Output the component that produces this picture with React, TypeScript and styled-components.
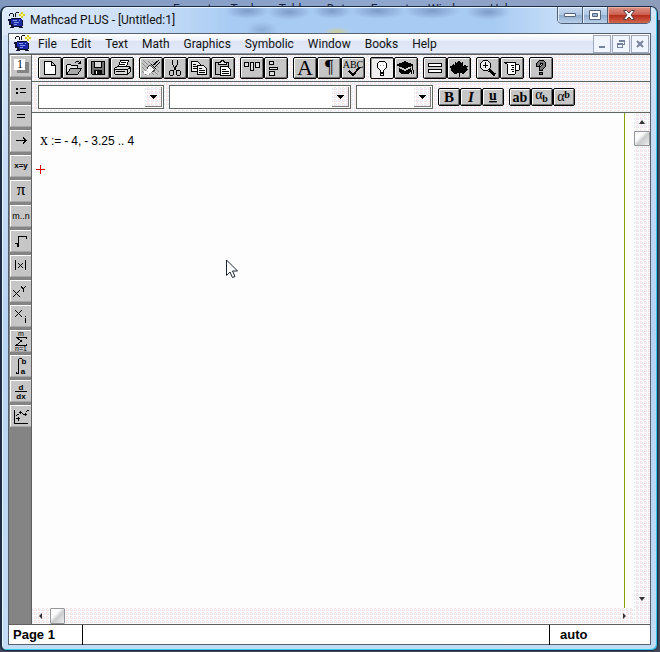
import React from 'react';
import styled, { createGlobalStyle, css } from 'styled-components';

const GlobalStyle = createGlobalStyle`
  *, *::before, *::after { box-sizing: border-box; }
  body { margin: 0; background: #42485a; }
  button, select { margin: 0; padding: 0; border: 0; background: none; font: inherit; color: inherit; }
  svg { display: block; }
`;

const uiFont = 'Roboto, "Open Sans", sans-serif';

const dither = css`
  background-color: #fdfcfd;
  background-image:
    conic-gradient(#f7e2e4 25%, transparent 0),
    conic-gradient(#e3e9f7 25%, transparent 0);
  background-size: 4px 2px, 2px 4px;
  background-position: 0 0, 1px 1px;
`;

const Desktop = styled.div`
  display: flex;
  flex-direction: column;
  min-height: 100vh;
  padding: 0 2px 1px 0;
  background: linear-gradient(90deg, #8098be 0, #8fa6cf 60%, #8c9cba 100%) top / 100% 20px no-repeat, #42485a;
`;

const BackMenu = styled.div`
  display: flex;
  gap: 19px;
  height: 6px;
  padding: 3px 0 0 173px;
  overflow: hidden;
  font: 12px/12px ${uiFont};
  color: #17233c;
`;

const Window = styled.div`
  flex: 1;
  display: flex;
  flex-direction: column;
  padding: 0 6px 5px 6px;
  border: 1px solid #1c2c44;
  border-left-width: 2px;
  border-radius: 7px 7px 6px 6px;
  box-shadow: inset -1px -1px 0 #2ccbf2, inset 1px 1px 0 #e9f5ff;
  background:
    radial-gradient(ellipse 22px 8px at 245px 4px, #7f9cc9, transparent),
    radial-gradient(ellipse 22px 8px at 287px 5px, #7f9cc9, transparent),
    radial-gradient(ellipse 20px 8px at 330px 4px, #7f9cc9, transparent),
    radial-gradient(ellipse 28px 8px at 376px 4px, #7f9cc9, transparent),
    radial-gradient(ellipse 28px 8px at 430px 4px, #7f9cc9, transparent),
    radial-gradient(ellipse 22px 8px at 486px 5px, #7f9cc9, transparent),
    radial-gradient(ellipse 16px 9px at 260px 23px, #8eaed8, transparent),
    radial-gradient(ellipse 14px 5px at 335px 25px, #d0cf99, transparent),
    linear-gradient(90deg, #dce9fa 0, #cbdff7 22%, #a8cbf3 35%, #a8cbf3 75%, #cfe2f8 88%, #d6e6f9 100%) top / 100% 28px no-repeat,
    linear-gradient(#d2e3f7, #b7d3f2 50%, #c3dcf5);
`;

const TitleBar = styled.header`
  display: flex;
  align-items: flex-start;
  height: 26px;
`;

const AppTitle = styled.h1`
  display: flex;
  align-items: center;
  gap: 5px;
  flex: 1;
  height: 26px;
  margin: 0;
  font: 12px/16px ${uiFont};
  color: #111;
`;

const Captions = styled.div`
  display: flex;
  border: 1px solid #4d6078;
  border-top: 0;
  border-radius: 0 0 5px 5px;
  overflow: hidden;
`;

const CaptionButton = styled.button<{ $close?: boolean }>`
  display: grid;
  place-items: center;
  width: ${p => (p.$close ? 42 : 25)}px;
  height: 16px;
  border-right: ${p => (p.$close ? 0 : 1)}px solid #4d6078;
  box-shadow: inset 1px 1px 0 ${p => (p.$close ? '#eeb0a4' : '#e6f1fc')};
  background: ${p =>
    p.$close
      ? 'linear-gradient(#dc9488 0, #cb5f50 48%, #b42a18 50%, #d2664d 100%)'
      : 'linear-gradient(#c8daef 0, #b0c8e5 48%, #8faccf 50%, #b7cfe9 100%)'};
`;

const Client = styled.div`
  flex: 1;
  display: flex;
  flex-direction: column;
  border: 1px solid #56606e;
  background: #fdfdfd;
`;

const MenuBar = styled.nav`
  display: flex;
  align-items: center;
  height: 20px;
  padding: 0 1px 0 5px;
  border-bottom: 1px solid #8b93a0;
  background: linear-gradient(#fff 0, #f1f4fc 30%, #dde4f5 40%, #e4eaf7 100%);
  font: 12px/16px ${uiFont};
  color: #111;
`;

const MenuItems = styled.div`
  display: flex;
  flex: 1;
  gap: 14px;
  padding-left: 7px;
`;

const DocButton = styled.button`
  display: grid;
  place-items: center;
  width: 18px;
  height: 18px;
  margin-left: 1px;
  border: 1px solid #a0a8bb;
  background: #f1f5fd;
`;

const Workspace = styled.div`
  flex: 1;
  display: flex;
  border-top: 1px solid #606060;
`;

const Palette = styled.aside`
  display: flex;
  flex-direction: column;
  gap: 3px;
  width: 23px;
  padding-left: 1px;
  border-right: 1px solid #606060;
  background: #848484;
`;

const PaletteButton = styled.button`
  width: 21px;
  height: 22px;
  border-top: 1px solid #fff;
  border-left: 1px solid #fff;
  border-bottom: 1px solid #a8a8a8;
  background: #c6c6c6;
`;

const Main = styled.main`
  flex: 1;
  min-width: 0;
  display: flex;
  flex-direction: column;
`;

const ToolBar = styled.div`
  display: flex;
  gap: 5px;
  height: 27px;
  padding: 2px 6px;
  border-bottom: 1px solid #606660;
  ${dither}
`;

const FormatBar = styled(ToolBar)`
  align-items: center;
  height: 31px;
`;

const Group = styled.div`
  display: flex;
`;

const ToolButton = styled.button<{ $active?: boolean }>`
  width: 24px;
  height: 22px;
  border: 1px solid #000;
  border-radius: 2px;
  box-shadow: ${p =>
    p.$active ? 'inset 1px 1px 0 #999' : 'inset 1px 1px 0 #fff, inset -1px -1px 0 #707070'};
  background: ${p => (p.$active ? '#eeeeee' : '#c6c6c6')};
`;

const StyleButton = styled(ToolButton)`
  width: 22px;
  height: 18px;
`;

const Combo = styled.div<{ $width: number }>`
  position: relative;
  width: ${p => p.$width}px;
  height: 24px;
  border: 1px solid #606660;
  background: #fff;
`;

const ComboSelect = styled.select`
  appearance: none;
  width: 100%;
  height: 100%;
  padding: 0 20px 0 4px;
  font: 12px ${uiFont};
`;

const ComboArrow = styled.span`
  position: absolute;
  top: 1px;
  right: 1px;
  display: grid;
  place-items: center;
  width: 17px;
  height: 20px;
  border-right: 1px solid #808080;
  border-bottom: 1px solid #808080;
  pointer-events: none;
  ${dither}
`;

const DocumentArea = styled.div`
  flex: 1;
  display: grid;
  grid-template-columns: 1fr 16px;
  grid-template-rows: 1fr 16px;
`;

const Sheet = styled.section`
  position: relative;
  margin-right: 9px;
  padding: 19px 3px;
  border-right: 1px solid #8a9f00;
`;

const Equation = styled.p`
  display: flex;
  align-items: baseline;
  gap: 3px;
  margin: 0 0 16px;
  padding-left: 5px;
  font: 12px/16px "Liberation Sans", Arial, sans-serif;
  color: #000;
`;

const Variable = styled.var`
  font: 16px/16px "Liberation Serif", serif;
`;

const Pointer = styled.svg`
  position: absolute;
  left: 194px;
  top: 146px;
`;

const VScroll = styled.div`
  display: flex;
  flex-direction: column;
  justify-content: space-between;
  ${dither}
`;

const HScroll = styled.div`
  display: flex;
  justify-content: space-between;
  ${dither}
`;

const ScrollPart = styled.div<{ $vertical?: boolean }>`
  display: flex;
  flex-direction: ${p => (p.$vertical ? 'column' : 'row')};
`;

const ScrollArrow = styled.button`
  display: grid;
  place-items: center;
  width: 16px;
  height: 18px;
`;

const ScrollThumb = styled.button`
  width: 16px;
  height: 15px;
  border: 1px solid #96969a;
  border-radius: 1px;
  background: linear-gradient(135deg, #fbfbfb 35%, #c9cbcd 55%, #ededed);
`;

const HArrow = styled(ScrollArrow)<{ $end?: boolean }>`
  height: 16px;
  width: ${p => (p.$end ? 20 : 18)}px;
`;

const HThumb = styled(ScrollThumb)`
  width: 15px;
  height: 16px;
`;

const Corner = styled.div`
  ${dither}
`;

const StatusBar = styled.footer`
  display: grid;
  grid-template-columns: 73px 1fr 101px;
  height: 20px;
  border-top: 1px solid #606060;
  background: #fff;
  font: bold 13px/20px "Liberation Sans", Arial, sans-serif;
  color: #000;
`;

const StatusCell = styled.div<{ $wide?: boolean }>`
  padding-left: ${p => (p.$wide ? 10 : 4)}px;
  & + & { border-left: 1px solid #000; }
`;

function Logo() {
  return (
    <svg width="17" height="17" viewBox="0 0 17 17" shapeRendering="crispEdges" aria-hidden="true">
      <path d="M3 7h11v1h1v6H4v-2H3z" fill="#1c2aa8" />
      <path d="M0 7h3v2H0zM1 9h2v3h2v3H3v-2H1zM3 6h10v1H3zM4 14h10v1H4zM14 8h1v6h-1z" fill="#101030" />
      <path d="M5 8h4v1H5zM6 10h5v1H6zM6 12h3v1H6zM11 8h1v1h-1z" fill="#7e95ee" />
      <path d="M2 1h3v1H2zM1 2h1v2H1zM5 2h1v3H5zM8 0h3v1H8zM7 1h1v4H7z" fill="#141414" />
      <path d="M13 0h2v2h2v2h-2v2h-2V4h-2V2h2z" fill="#d8cc26" />
      <path d="M13 2h2v2h-2z" fill="#fff78a" />
      <path d="M2 15h4v1H2zM11 15h4v1h-4z" fill="#101030" />
    </svg>
  );
}

type IconProps = { children: React.ReactNode; w?: number; h?: number };

function Drawing({ children, w = 22, h = 20 }: IconProps) {
  return (
    <svg
      width={w}
      height={h}
      viewBox={`0 0 ${w} ${h}`}
      fill="none"
      stroke="#000"
      shapeRendering="crispEdges"
      aria-hidden="true"
    >
      {children}
    </svg>
  );
}

type LetterProps = {
  x: number;
  y: number;
  size: number;
  children: React.ReactNode;
  sans?: boolean;
  bold?: boolean;
  italic?: boolean;
  underline?: boolean;
};

function Letter({ x, y, size, children, sans, bold, italic, underline }: LetterProps) {
  return (
    <text
      x={x}
      y={y}
      textAnchor="middle"
      fill="#000"
      stroke="none"
      fontFamily={sans ? '"Liberation Sans", sans-serif' : '"Liberation Serif", serif'}
      fontSize={size}
      fontWeight={bold ? 700 : 400}
      fontStyle={italic ? 'italic' : 'normal'}
      textDecoration={underline ? 'underline' : undefined}
    >
      {children}
    </text>
  );
}

type Tool = { name: string; icon: React.ReactNode; active?: boolean };

const toolGroups: Tool[][] = [
  [
    { name: 'New', icon: <path d="M5.5 3.5h7l4 4v9h-11zM12.5 3.5v4h4" fill="#fff" /> },
    {
      name: 'Open',
      icon: (
        <>
          <path d="M3.5 16.5v-9l1-1h3l1 1h6v3" fill="#e4e4e4" />
          <path d="M3.5 16.5l4-6h11l-4 6z" fill="#a8a8a8" />
          <path d="M11.5 5.5l2-2h2l2 2M17.5 2.5v3h-3" />
        </>
      ),
    },
    {
      name: 'Save',
      icon: (
        <>
          <path d="M4.5 3.5h13v13h-12l-1-1z" fill="#707070" />
          <path d="M7.5 3.5h7v6h-7z" fill="#d8d8d8" />
          <path d="M7.5 16.5v-4h7v4z" fill="#111" />
          <path d="M9.5 13v3" stroke="#fff" />
        </>
      ),
    },
    {
      name: 'Print',
      icon: (
        <>
          <path d="M7.5 8.5l2-6h8l-2 6z" fill="#fff" />
          <path d="M10 4.5h5M9 6.5h5" />
          <path d="M3.5 10.5l3-2h11l2 1v4l-3 3h-12l-1-1z" fill="#d8d8d8" />
          <path d="M3.5 11.5h13v4M5 13.5h9M16.5 11.5l3-2" />
        </>
      ),
    },
  ],
  [
    {
      name: 'Clear',
      icon: (
        <>
          <path d="M2 5l12 12M3 2l15 15M8 3l11 11M2 9l8 8M12 3l7 7M2 13l4 4" stroke="#8c8c8c" />
          <path d="M18.5 2.5l-5 5M19.5 4.5l-5 5M17 3l-5 5M11 6l5 5" />
          <path d="M10 7l5 5-3 2-5-4z" fill="#eee" stroke="#444" />
          <path d="M8 10l4 4-3 1-3-3z" fill="#fff" stroke="none" />
          <path d="M4 13h3v1h2v3H7v-1H4z" fill="#fff" stroke="none" />
        </>
      ),
    },
    {
      name: 'Cut',
      icon: (
        <>
          <path d="M8.5 2v4l4 7M13.5 2v4l-4 7M11 9v2" />
          <path d="M6.5 12.5h2l1 1v3l-1 1h-2l-1-1v-3zM13.5 12.5h2l1 1v3l-1 1h-2l-1-1v-3z" />
        </>
      ),
    },
    {
      name: 'Copy',
      icon: (
        <>
          <path d="M3.5 3.5h6l3 3v7h-9z" fill="#eee" />
          <path d="M5 6.5h3M5 8.5h4M5 10.5h4" />
          <path d="M9.5 7.5h6l3 3v6h-9z" fill="#eee" />
          <path d="M11 10.5h3M11 12.5h6M11 14.5h6" />
        </>
      ),
    },
    {
      name: 'Paste',
      icon: (
        <>
          <path d="M3.5 4.5h13v12h-13z" fill="#bbb" />
          <path d="M6.5 6.5v-2h2l1-2h2l1 2h2v2z" fill="#e8e8e8" />
          <path d="M8.5 8.5h7l3 3v6h-10z" fill="#fff" />
          <path d="M10 11.5h4M10 13.5h7M10 15.5h7" />
        </>
      ),
    },
  ],
  [
    {
      name: 'Align across',
      icon: <path d="M3.5 4.5h4v4h-4zM9.5 4.5h3v8h-3zM14.5 4.5h4v5h-4z" fill="#ddd" />,
    },
    {
      name: 'Align down',
      icon: <path d="M4.5 3.5h4v3h-4zM4.5 9.5h8v2h-8zM4.5 13.5h5v4h-5z" fill="#ddd" />,
    },
  ],
  [
    { name: 'Text region', icon: <Letter x={11} y={17} size={22}>A</Letter> },
    { name: 'Text paragraph', icon: <Letter x={11} y={15} size={18}>¶</Letter> },
    {
      name: 'Check spelling',
      icon: (
        <>
          <Letter x={11} y={10} size={10}>ABC</Letter>
          <path d="M7 13l4 4 7-8" strokeWidth="2" />
        </>
      ),
    },
  ],
  [
    {
      name: 'Live symbolics',
      active: true,
      icon: (
        <>
          <path d="M9.5 14.5v-2l-3-3v-4l2-2h5l2 2v4l-3 3v2zM9.5 15.5h3v2h-3z" fill="#fff" />
          <path d="M9 7.5h1M12 7.5h1" stroke="#999" />
        </>
      ),
    },
    {
      name: 'QuickSheets',
      icon: (
        <>
          <path d="M1 7l9-4 9 4-9 4z" fill="#000" stroke="none" />
          <path d="M4 10l6 3 6-3v4l-3 2H7l-3-2z" fill="#000" stroke="none" />
          <path d="M17.5 7v5M18.5 12v4M16.5 12v4" />
        </>
      ),
    },
  ],
  [
    { name: 'Evaluate', icon: <path d="M4.5 5.5h13v3h-13zM4.5 11.5h13v3h-13z" fill="#fff" /> },
    {
      name: 'Symbolic evaluation',
      icon: (
        <path
          d="M11 2l2 3 2-1v4l2-2 1 2 2 0-1 3 1 1-4 3v1l-4-1v4h-1v-4l-5 1v-1l-4-3 1-1-1-3h2l1-2 2 2V4l2 1z"
          fill="#000"
          stroke="none"
        />
      ),
    },
  ],
  [
    {
      name: 'Zoom',
      icon: (
        <>
          <path d="M6.5 2.5h4l3 3v4l-3 3h-4l-3-3v-4z" fill="#eee" />
          <path d="M8.5 4v6M6 7.5h5" />
          <path d="M12 12l6 5" strokeWidth="3" />
        </>
      ),
    },
    {
      name: 'Units',
      icon: (
        <>
          <path d="M3.5 4.5h11v11l-1 1h-6l-1-1v-9zM14.5 6.5h3l1 1v4l-1 1h-3" fill="#fff" />
          <path d="M10 7.5h3M11 9.5h2M10 11.5h3M11 13.5h2" />
        </>
      ),
    },
  ],
  [
    {
      name: 'Help',
      icon: (
        <>
          <path d="M6.5 8.5v-3l3-3h4l2 2v4l-3 3v1h-3v-3l3-3v-1h-2l-1 3z" fill="#777" />
          <path d="M9.5 14.5h3v2h-3z" fill="#777" />
        </>
      ),
    },
  ],
];

const styleGroups: Tool[][] = [
  [
    { name: 'Bold', icon: <Letter x={10} y={13} size={15} bold>B</Letter> },
    { name: 'Italic', icon: <Letter x={10} y={13} size={15} bold italic>I</Letter> },
    { name: 'Underline', icon: <Letter x={10} y={11} size={14} bold underline>u</Letter> },
  ],
  [
    { name: 'Normal', icon: <Letter x={10} y={13} size={14} bold>ab</Letter> },
    {
      name: 'Subscript',
      icon: (
        <>
          <Letter x={7} y={10} size={14}>α</Letter>
          <Letter x={13} y={13} size={10} bold>b</Letter>
        </>
      ),
    },
    {
      name: 'Superscript',
      icon: (
        <>
          <Letter x={7} y={12} size={14}>α</Letter>
          <Letter x={13} y={9} size={10} bold>b</Letter>
        </>
      ),
    },
  ],
];

const paletteTools: Tool[] = [
  {
    name: 'Palette 1',
    icon: (
      <>
        <path d="M6 6h12v11H6z" fill="#848484" stroke="none" />
        <path d="M3 3h11v11H3z" fill="#fff" stroke="none" />
        <Letter x={9} y={12} size={12}>1</Letter>
      </>
    ),
  },
  {
    name: 'Definition',
    icon: <path d="M5 7h2v2H5zM5 11h2v2H5zM9 7h6v1H9zM9 11h6v1H9z" fill="#000" stroke="none" />,
  },
  { name: 'Equals', icon: <path d="M6 8.5h8M6 11.5h8" /> },
  { name: 'Arrow', icon: <path d="M5 9.5h10M12 6.5l3 3-3 3" /> },
  { name: 'Boolean equals', icon: <Letter x={10} y={12} size={8} sans bold>x=y</Letter> },
  { name: 'Pi', icon: <Letter x={10} y={14} size={17}>π</Letter> },
  { name: 'Range', icon: <Letter x={10} y={13} size={9} sans>m..n</Letter> },
  { name: 'Square root', icon: <path d="M4 12.5h2l1 3v-10h8v2" /> },
  {
    name: 'Absolute value',
    icon: (
      <>
        <path d="M4.5 4v10M14.5 4v10" />
        <path d="M7 7l5 5M12 7l-5 5" />
      </>
    ),
  },
  {
    name: 'Exponent',
    icon: (
      <>
        <path d="M2 9l7 7M9 9l-7 7" />
        <path d="M10 5l2 3 3-3M12.5 8v3" />
      </>
    ),
  },
  {
    name: 'Subscript',
    icon: (
      <>
        <path d="M4 4l7 7M11 4l-7 7" />
        <path d="M14 10h1v1h-1zM14 12h1v5h-1z" fill="#000" stroke="none" />
      </>
    ),
  },
  {
    name: 'Summation',
    icon: (
      <>
        <Letter x={10} y={5} size={7} sans>m</Letter>
        <path d="M15 8v-1.500H5.500l5 3.500-5 4H15V12.500" />
        <Letter x={10} y={20} size={7} sans>n=1</Letter>
      </>
    ),
  },
  {
    name: 'Integral',
    icon: (
      <>
        <path d="M5 16v1.500h2.500V3.500l1-1H11" />
        <Letter x={13} y={8} size={8} sans bold>b</Letter>
        <Letter x={12} y={18} size={8} sans bold>a</Letter>
      </>
    ),
  },
  {
    name: 'Derivative',
    icon: (
      <>
        <Letter x={10} y={9} size={8} sans bold>d</Letter>
        <path d="M4 10.500h12" />
        <Letter x={10} y={18} size={8} sans bold>dx</Letter>
      </>
    ),
  },
  {
    name: 'Graph',
    icon: (
      <>
        <path d="M3.500 4v13H17" />
        <path d="M5 12.500h4M7.500 11v4M8 6.500h3M9.500 5v3M13 8.500h3M14.500 7v3" />
        <path d="M5 10l3-2M11 7l3 2M15 6l3-2" strokeDasharray="1 1" />
      </>
    ),
  },
];

const menus = ['File', 'Edit', 'Text', 'Math', 'Graphics', 'Symbolic', 'Window', 'Books', 'Help'];
const combos = [
  { label: 'Style', width: 126 },
  { label: 'Font', width: 182 },
  { label: 'Size', width: 77 },
];

const triangles = {
  up: 'M0 5l3-4 3 4z',
  down: 'M0 1h6l-3 4z',
  left: 'M4 0v6L1 3z',
  right: 'M2 0v6l3-3z',
};

function Triangle({ dir }: { dir: keyof typeof triangles }) {
  return (
    <svg width="6" height="6" viewBox="0 0 6 6" fill="#333" aria-hidden="true">
      <path d={triangles[dir]} />
    </svg>
  );
}

export default function App() {
  return (
    <Desktop>
      <GlobalStyle />
      <BackMenu aria-hidden="true">
        {['Format', 'Tools', 'Table', 'Data', 'Format', 'Window', 'Help'].map((t, i) => (
          <span key={i}>{t}</span>
        ))}
      </BackMenu>
      <Window>
        <TitleBar>
          <AppTitle>
            <Logo />
            Mathcad PLUS - [Untitled:1]
          </AppTitle>
          <Captions>
            <CaptionButton aria-label="Minimize">
              <svg width="12" height="6" viewBox="0 0 12 6">
                <path d="M.5 1.500h11v3H.5z" fill="#fff" stroke="#56657a" />
              </svg>
            </CaptionButton>
            <CaptionButton aria-label="Maximize">
              <svg width="12" height="10" viewBox="0 0 12 10">
                <path d="M.5.5h11v9H.5z" fill="#fff" stroke="#56657a" />
                <path d="M3.500 3.500h5v3h-5z" fill="#9ab5d6" stroke="#56657a" />
              </svg>
            </CaptionButton>
            <CaptionButton $close aria-label="Close">
              <svg width="12" height="10" viewBox="0 0 12 10">
                <path d="M.5.5h3L6 3 8.500.5h3L8 5l3.500 4.500h-3L6 7 3.500 9.500h-3L4 5z" fill="#fff" stroke="#56404a" />
              </svg>
            </CaptionButton>
          </Captions>
        </TitleBar>
        <Client>
          <MenuBar>
            <Logo />
            <MenuItems>
              {menus.map(m => (
                <button key={m}>{m}</button>
              ))}
            </MenuItems>
            <DocButton aria-label="Minimize document">
              <svg width="10" height="10" viewBox="0 0 10 10" shapeRendering="crispEdges">
                <path d="M2 7h6v2H2z" fill="#76839c" />
              </svg>
            </DocButton>
            <DocButton aria-label="Restore document">
              <svg width="10" height="10" viewBox="0 0 10 10" fill="none" stroke="#76839c" shapeRendering="crispEdges">
                <path d="M3.500 3V1.500h5v4H7M3 2h6M1.500 4.500h5v4h-5zM1 5h6" />
              </svg>
            </DocButton>
            <DocButton aria-label="Close document">
              <svg width="10" height="10" viewBox="0 0 10 10">
                <path d="M2 2l6 6M8 2L2 8" stroke="#76839c" strokeWidth="2" />
              </svg>
            </DocButton>
          </MenuBar>
          <Workspace>
            <Palette>
              {paletteTools.map(t => (
                <PaletteButton key={t.name} aria-label={t.name}>
                  <Drawing w={20} h={20}>{t.icon}</Drawing>
                </PaletteButton>
              ))}
            </Palette>
            <Main>
              <ToolBar>
                {toolGroups.map((g, i) => (
                  <Group key={i}>
                    {g.map(t => (
                      <ToolButton key={t.name} aria-label={t.name} $active={t.active}>
                        <Drawing>{t.icon}</Drawing>
                      </ToolButton>
                    ))}
                  </Group>
                ))}
              </ToolBar>
              <FormatBar>
                {combos.map(c => (
                  <Combo key={c.label} $width={c.width}>
                    <ComboSelect aria-label={c.label} />
                    <ComboArrow>
                      <svg width="7" height="4" viewBox="0 0 7 4" shapeRendering="crispEdges" aria-hidden="true">
                        <path d="M0 0h7v1H0zM1 1h5v1H1zM2 2h3v1H2zM3 3h1v1H3z" />
                      </svg>
                    </ComboArrow>
                  </Combo>
                ))}
                {styleGroups.map((g, i) => (
                  <Group key={i}>
                    {g.map(t => (
                      <StyleButton key={t.name} aria-label={t.name}>
                        <Drawing w={20} h={16}>{t.icon}</Drawing>
                      </StyleButton>
                    ))}
                  </Group>
                ))}
              </FormatBar>
              <DocumentArea>
                <Sheet>
                  <Equation>
                    <Variable>x</Variable>
                    <span>:=</span>
                    <span>-</span>
                    <span>4,</span>
                    <span>-</span>
                    <span>3.25</span>
                    <span>..</span>
                    <span>4</span>
                  </Equation>
                  <svg width="11" height="9" viewBox="0 0 11 9" stroke="#e00000" shapeRendering="crispEdges" aria-hidden="true">
                    <path d="M1 4.500h9M5.500 0v9" />
                  </svg>
                  <Pointer width="13" height="20" viewBox="0 0 13 20" aria-hidden="true">
                    <path d="M.5 1v15.500l3.500-3.500 2.500 5.500 2.500-1-2.500-5.500h5z" fill="#fff" stroke="#1c2430" />
                  </Pointer>
                </Sheet>
                <VScroll>
                  <ScrollPart $vertical>
                    <ScrollArrow aria-label="Scroll up"><Triangle dir="up" /></ScrollArrow>
                    <ScrollThumb aria-label="Vertical position" />
                  </ScrollPart>
                  <ScrollArrow aria-label="Scroll down"><Triangle dir="down" /></ScrollArrow>
                </VScroll>
                <HScroll>
                  <ScrollPart>
                    <HArrow aria-label="Scroll left"><Triangle dir="left" /></HArrow>
                    <HThumb aria-label="Horizontal position" />
                  </ScrollPart>
                  <HArrow $end aria-label="Scroll right"><Triangle dir="right" /></HArrow>
                </HScroll>
                <Corner />
              </DocumentArea>
            </Main>
          </Workspace>
          <StatusBar>
            <StatusCell>Page 1</StatusCell>
            <StatusCell />
            <StatusCell $wide>auto</StatusCell>
          </StatusBar>
        </Client>
      </Window>
    </Desktop>
  );
}
